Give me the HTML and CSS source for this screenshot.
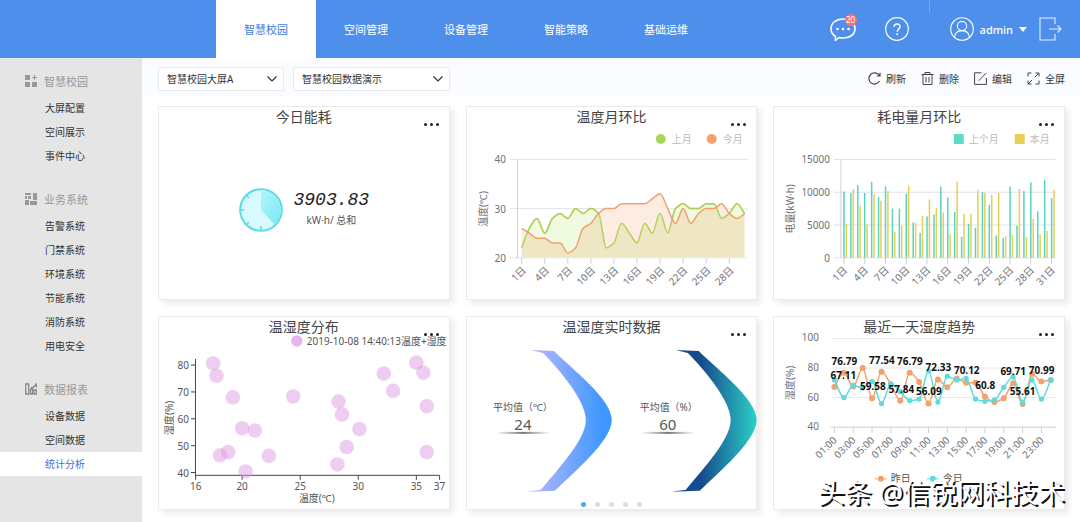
FILE: index.html
```html
<!DOCTYPE html>
<html lang="zh-CN">
<head>
    <meta charset="UTF-8">
    <meta name="viewport" content="width=device-width, initial-scale=1.0">
    <title>智慧校园</title>
    <link rel="stylesheet" href="styles.css">
</head>
<body>
    <header class="header">
        <nav class="main-nav">
            <a href="#" class="active">智慧校园</a>
            <a href="#">空间管理</a>
            <a href="#">设备管理</a>
            <a href="#">智能策略</a>
            <a href="#">基础运维</a>
        </nav>
        <div class="user-area">
            <button class="icon-btn chat" aria-label="消息">
                <svg width="26" height="26" viewBox="0 0 26 26" fill="none" stroke="#fff" stroke-width="1.6">
                    <path d="M5.5 20.5 C2.5 18.500 1 16 1 13 C1 7 6 3 13 3 C20 3 25 7 25 12.500 C25 18.500 20 22 13.500 22 C11.500 22 10 21.800 9 21.500 L5.300 24.500 Z" stroke-linejoin="round"/>
                    <g fill="#fff" stroke="none"><circle cx="7.500" cy="13" r="1.300"/><circle cx="13" cy="13" r="1.300"/><circle cx="18.500" cy="13" r="1.300"/></g>
                </svg>
                <span class="badge">20</span>
            </button>
            <button class="icon-btn help" aria-label="帮助">
                <svg width="24" height="24" viewBox="0 0 24 24" fill="none" stroke="#fff" stroke-width="1.200">
                    <circle cx="12" cy="12" r="11.300"/>
                    <path d="M9 9.800 C9 6 15 6 15 9.600 C15 12 12.200 12 12.200 14.800" stroke-width="1.500"/>
                    <circle cx="12.200" cy="17.300" r="1" fill="#fff" stroke="none"/>
                </svg>
            </button>
            <span class="divider"></span>
            <button class="user-btn">
                <svg width="24" height="24" viewBox="0 0 24 24" fill="none" stroke="#fff" stroke-width="1.100">
                    <circle cx="12" cy="12" r="11.300"/>
                    <circle cx="12" cy="9" r="4.600"/>
                    <path d="M4.500 20.500 C5 16 8 13.600 12 13.600 C16 13.600 19 16 19.500 20.500"/>
                </svg>
                admin
                <svg width="8" height="5" viewBox="0 0 8 5"><path d="M0 0 H8 L4 5 Z" fill="#fff"/></svg>
            </button>
            <button class="icon-btn logout" aria-label="退出">
                <svg width="23" height="24" viewBox="0 0 23 24" fill="none" stroke="#e6f0ff" stroke-width="1.100">
                    <path d="M16 7 V1 H1 V23 H16 V17 M10 12 H22 M18.500 8.500 L22 12 L18.500 15.500"/>
                </svg>
            </button>
        </div>
    </header>

    <div class="page">
        <aside class="sidebar">
            <section class="menu-group">
                <h2>
                    <svg width="12" height="12" viewBox="0 0 12 12" fill="#999"><path d="M0 0h5v5H0zM0 7h5v5H0zM7 7h5v5H7zM9 0h1v2h2v1h-2v2H9V3H7V2h2z"/></svg>
                    智慧校园
                </h2>
                <a href="#">大屏配置</a>
                <a href="#">空间展示</a>
                <a href="#">事件中心</a>
            </section>
            <section class="menu-group">
                <h2>
                    <svg width="12" height="12" viewBox="0 0 12 12" fill="#999"><path d="M0 0h6v2H0zM0 3h2v3H0zM3 3h3v3H3zM0 7h4v5H0zM8 0h4v7H8zM5 8h7v4H5z"/></svg>
                    业务系统
                </h2>
                <a href="#">告警系统</a>
                <a href="#">门禁系统</a>
                <a href="#">环境系统</a>
                <a href="#">节能系统</a>
                <a href="#">消防系统</a>
                <a href="#">用电安全</a>
            </section>
            <section class="menu-group">
                <h2>
                    <svg width="12" height="12" viewBox="0 0 12 12" fill="none" stroke="#888" stroke-width="1.300"><path d="M.7 1h3v10h-3zM5.500 11V6h2v5zM9 11V7h2.300v4zM6 4.500h2L11.300 1v3.500"/></svg>
                    数据报表
                </h2>
                <a href="#">设备数据</a>
                <a href="#">空间数据</a>
                <a href="#" class="active">统计分析</a>
            </section>
        </aside>

        <main class="content">
            <div class="toolbar">
                <label class="select-box screen-select">
                    <select aria-label="大屏"><option>智慧校园大屏A</option></select>
                    <svg width="10" height="6" viewBox="0 0 10 6" fill="none" stroke="#333" stroke-width="1.200"><path d="M.5.5 L5 5 L9.500.5"/></svg>
                </label>
                <label class="select-box data-select">
                    <select aria-label="数据"><option>智慧校园数据演示</option></select>
                    <svg width="10" height="6" viewBox="0 0 10 6" fill="none" stroke="#333" stroke-width="1.200"><path d="M.5.5 L5 5 L9.500.5"/></svg>
                </label>
                <div class="actions">
                    <button>
                        <svg width="13" height="13" viewBox="0 0 13 13" fill="none" stroke="#444" stroke-width="1.200"><path d="M11.500 9 A5.600 5.600 0 1 1 11.300 3.500 M12 .8 V4 H8.800"/></svg>
                        刷新
                    </button>
                    <button>
                        <svg width="13" height="13" viewBox="0 0 13 13" fill="none" stroke="#444"><path d="M.5 2.500 H12.500 M4 2.500 V.5 H9 V2.500 M2 2.500 V12.500 H11 V2.500 M5 5 V10.500 M8 5 V10.500"/></svg>
                        删除
                    </button>
                    <button>
                        <svg width="13" height="13" viewBox="0 0 13 13" fill="none" stroke="#444"><path d="M7.500 .8 H.6 V12.400 H12.400 V6 M4.500 8.800 L12.300 1"/></svg>
                        编辑
                    </button>
                    <button>
                        <svg width="13" height="13" viewBox="0 0 13 13" fill="none" stroke="#444"><path d="M1 4.500 V1 H4.500 M8.500 1 H12 V4.500 M12 8.500 V12 H8.500 M4.500 12 H1 V8.500 M12 1 L8 5 M1 12 L5 8"/></svg>
                        全屏
                    </button>
                </div>
            </div>

            <div class="grid">
                <section class="card">
                    <h3>今日能耗</h3>
                    <button class="more" aria-label="更多"><i></i><i></i><i></i></button>
                    <div class="energy">
                        <svg width="44" height="44" viewBox="0 0 44 44">
                            <defs>
                                <linearGradient id="clock-fill" x1="0" y1="0" x2="1" y2="1">
                                    <stop offset="0" stop-color="#b5f5fa"/><stop offset="1" stop-color="#79e9f1"/>
                                </linearGradient>
                            </defs>
                            <circle cx="22" cy="22" r="20.800" fill="#d6fafd" stroke="#5cdbe4" stroke-width="2"/>
                            <path d="M22 22 V2 A20 20 0 0 1 35.500 36.500 Z" fill="url(#clock-fill)"/>
                            <path d="M22 43 V38 M1 22 H5 M7 37 L10 34 M7 7 L10 10" stroke="#5cdbe4" stroke-width="1.500"/>
                        </svg>
                        <div class="energy-text">
                            <strong>3903.83</strong>
                            <span>kW·h/ 总和</span>
                        </div>
                    </div>
                </section>

                <section class="card">
                    <h3>温度月环比</h3>
                    <button class="more" aria-label="更多"><i></i><i></i><i></i></button>
                    <svg class="chart" id="temp-chart" viewBox="0 20 290 172"></svg>
                </section>

                <section class="card">
                    <h3>耗电量月环比</h3>
                    <button class="more" aria-label="更多"><i></i><i></i><i></i></button>
                    <svg class="chart" id="power-chart" viewBox="0 20 290 172"></svg>
                </section>

                <section class="card">
                    <h3>温湿度分布</h3>
                    <button class="more" aria-label="更多"><i></i><i></i><i></i></button>
                    <svg class="chart" id="scatter-chart" viewBox="0 20 290 172"></svg>
                </section>

                <section class="card">
                    <h3>温湿度实时数据</h3>
                    <button class="more" aria-label="更多"><i></i><i></i><i></i></button>
                    <svg class="chart" viewBox="0 20 290 162">
                        <defs>
                            <linearGradient id="arrow-blue"><stop offset="0.2" stop-color="#a3b2fc"/><stop offset="0.900" stop-color="#3d97ff"/></linearGradient>
                            <linearGradient id="arrow-teal"><stop offset="0.350" stop-color="#164c8e"/><stop offset="1" stop-color="#2cd0c8"/></linearGradient>
                            <linearGradient id="underline"><stop offset="0" stop-color="#777" stop-opacity="0"/><stop offset="0.500" stop-color="#777"/><stop offset="1" stop-color="#777" stop-opacity="0"/></linearGradient>
                            <path id="arrow" d="M64 33 L87 34 C106 53 145 82 145 103 C145 124 106 156 88 174 L60 175 L74 173 C93 150 119 122 119 103 C119 84 93 53 76 36 Z"/>
                        </defs>
                        <use href="#arrow" fill="url(#arrow-blue)"/>
                        <use href="#arrow" x="145" fill="url(#arrow-teal)"/>
                        <g text-anchor="middle">
                            <text x="56" y="94">平均值（℃）</text>
                            <text x="56" y="113" class="reading">24</text>
                            <text x="202" y="94">平均值（%）</text>
                            <text x="201" y="113" class="reading">60</text>
                        </g>
                        <rect x="29" y="115" width="54" height="2" fill="url(#underline)"/>
                        <rect x="174" y="115" width="54" height="2" fill="url(#underline)"/>
                    </svg>
                    <div class="pager">
                        <button class="active" aria-label="第1页"></button>
                        <button aria-label="第2页"></button>
                        <button aria-label="第3页"></button>
                        <button aria-label="第4页"></button>
                        <button aria-label="第5页"></button>
                    </div>
                </section>

                <section class="card">
                    <h3>最近一天湿度趋势</h3>
                    <button class="more" aria-label="更多"><i></i><i></i><i></i></button>
                    <svg class="chart" id="humidity-chart" viewBox="0 20 290 172"></svg>
                </section>
            </div>
        </main>
    </div>
    <div class="watermark">头条 @信锐网科技术</div>

    <script src="charts.js"></script>
</body>
</html>
```
FILE: styles.css
```css
* {
    box-sizing: border-box;
}

body {
    margin: 0;
    min-height: 100vh;
    display: flex;
    flex-direction: column;
    font-family: "Noto Sans", "Noto Sans CJK SC", sans-serif;
    font-size: 10px;
    color: #333;
    background: #fff;
}

a {
    color: inherit;
    text-decoration: none;
}

button {
    display: flex;
    align-items: center;
    border: none;
    padding: 0;
    background: none;
    font: inherit;
    color: inherit;
    cursor: pointer;
}

svg {
    flex-shrink: 0;
}

/* header */
.header {
    height: 58px;
    padding: 0 18px 0 216px;
    display: flex;
    justify-content: space-between;
    background: #4f8fec;
    color: #fff;
}

.main-nav {
    display: flex;
}

.main-nav a {
    width: 100px;
    display: flex;
    align-items: center;
    justify-content: center;
    font-size: 11px;
}

.main-nav .active {
    background: #fff;
    color: #3b7de0;
}

.user-area {
    display: flex;
    align-items: center;
}

.icon-btn {
    position: relative;
}

.badge {
    position: absolute;
    top: -2px;
    right: -1px;
    width: 12px;
    height: 12px;
    border-radius: 50%;
    background: #f8706c;
    font-size: 8px;
    line-height: 12px;
    text-align: center;
}

.help {
    margin-left: 29px;
}

.divider {
    align-self: flex-start;
    width: 1px;
    height: 12px;
    margin: 0 20px;
    background: #78a8f0;
}

.user-btn {
    gap: 6px;
    font-size: 11px;
    font-weight: 500;
}

.logout {
    margin-left: 12px;
}

/* layout */
.page {
    flex: 1;
    display: flex;
}

.sidebar {
    width: 142px;
    flex-shrink: 0;
    padding-top: 9px;
    background: #e5e5e5;
}

.menu-group {
    margin-bottom: 17px;
}

.menu-group h2 {
    height: 28px;
    margin: 0 0 1px;
    padding-left: 25px;
    display: flex;
    align-items: center;
    gap: 7px;
    font-size: 11px;
    font-weight: 400;
    color: #999;
}

.menu-group a {
    display: block;
    padding-left: 45px;
    line-height: 24px;
}

.menu-group .active {
    background: #fff;
    color: #3b6fe0;
}

.content {
    flex: 1;
    min-width: 0;
}

.toolbar {
    height: 39px;
    padding: 2px 15px 0 16px;
    display: flex;
    align-items: center;
    gap: 9px;
    background: #fafcff;
}

.select-box {
    position: relative;
}

.screen-select {
    width: 126px;
}

.data-select {
    width: 157px;
}

.select-box select {
    appearance: none;
    width: 100%;
    height: 24px;
    padding: 0 8px;
    border: 1px solid #e8ebf0;
    border-radius: 1px;
    background: #fff;
    font: inherit;
    color: inherit;
}

.select-box svg {
    position: absolute;
    right: 7px;
    top: 9px;
    pointer-events: none;
}

.actions {
    margin-left: auto;
    display: flex;
    gap: 15px;
}

.actions button {
    gap: 5px;
}

/* cards */
.grid {
    display: grid;
    grid-template-columns: repeat(3, 1fr);
    gap: 16px;
    padding: 9px 15px 12px 16px;
}

.card {
    position: relative;
    display: flex;
    flex-direction: column;
    border: 1px solid #ebebeb;
    background: #fff;
    box-shadow: 4px 4px 6px rgba(0, 0, 0, 0.08);
}

.card h3 {
    margin: 0;
    font-size: 14px;
    font-weight: 400;
    line-height: 20px;
    text-align: center;
    color: #444;
}

.more {
    position: absolute;
    top: 16px;
    right: 10px;
    gap: 3px;
}

.more i {
    width: 3px;
    height: 3px;
    border-radius: 50%;
    background: #222;
}

.energy {
    flex: 1;
    display: flex;
    align-items: center;
    justify-content: center;
    gap: 11px;
    padding-bottom: 6px;
}

.energy-text {
    display: flex;
    flex-direction: column;
    align-items: center;
    line-height: 20px;
    color: #555;
}

.energy-text strong {
    font-family: "Liberation Mono", monospace;
    font-size: 18px;
    font-style: italic;
    font-weight: 400;
    color: #222;
}

/* charts */
.chart {
    display: block;
    width: 100%;
    overflow: visible;
    font-size: 10px;
    fill: #555;
}

.chart .reading {
    font-size: 15px;
}

.chart .axis-text {
    fill: #6e7079;
}

.chart .legend {
    fill: #bbb;
}

.chart .value {
    fill: #111;
    font-weight: 700;
}

.pager {
    display: flex;
    justify-content: center;
    gap: 9px;
    padding-top: 3px;
}

.pager button {
    width: 5px;
    height: 5px;
    border-radius: 50%;
    background: #ddd;
}

.pager .active {
    background: #45aee0;
}

.watermark {
    position: absolute;
    right: 15px;
    bottom: 11px;
    font-size: 27px;
    line-height: 36px;
    color: #fff;
    text-shadow: 2px 2px 0 #111;
}
```
FILE: charts.js
```js
// small helpers that build svg markup
function line(x1, y1, x2, y2, color) {
    return `<line x1="${x1}" y1="${y1}" x2="${x2}" y2="${y2}" stroke="${color}"/>`;
}

function text(x, y, str, cls = 'axis-text', anchor = 'end') {
    return `<text x="${x}" y="${y}" class="${cls}" text-anchor="${anchor}">${str}</text>`;
}

function slanted(x, y, str) {
    return `<text transform="translate(${x} ${y}) rotate(-45)" class="axis-text" text-anchor="end">${str}</text>`;
}

function sideTitle(x, y, str, cls = 'axis-text') {
    return `<text transform="translate(${x} ${y}) rotate(-90)" class="${cls}" text-anchor="middle">${str}</text>`;
}

function dot(x, y, r, color) {
    return `<circle cx="${x}" cy="${y}" r="${r}" fill="${color}"/>`;
}

// monotone curve, flat at every local peak
function smooth(pts) {
    const slope = pts.map((p, i) => {
        if (i === 0 || i === pts.length - 1) return null;
        const a = (p[1] - pts[i - 1][1]) / (p[0] - pts[i - 1][0]);
        const b = (pts[i + 1][1] - p[1]) / (pts[i + 1][0] - p[0]);
        return a * b <= 0 ? 0 : 2 * a * b / (a + b);
    });
    const n = pts.length - 1;
    slope[0] = (pts[1][1] - pts[0][1]) / (pts[1][0] - pts[0][0]);
    slope[n] = (pts[n][1] - pts[n - 1][1]) / (pts[n][0] - pts[n - 1][0]);
    let d = `M${pts[0]}`;
    for (let i = 0; i < n; i++) {
        const [x0, y0] = pts[i], [x1, y1] = pts[i + 1];
        const h = (x1 - x0) / 3;
        d += ` C${x0 + h},${y0 + slope[i] * h} ${x1 - h},${y1 - slope[i + 1] * h} ${x1},${y1}`;
    }
    return d;
}

// 温度月环比
function drawTemp() {
    const last = [22, 26, 28, 25, 28, 29, 28, 30, 29, 30, 29, 22, 23, 27, 25, 23, 27, 25, 29, 25, 30, 31, 30, 30, 31, 31, 28, 29, 31, 29];
    const current = [26, 25, 24, 24, 23, 23, 21, 22, 26, 27, 29, 30, 30, 31, 31, 31, 31, 32, 33, 30, 27, 30, 27, 29, 30, 30, 31, 29, 28, 29];
    const px = i => 54.7 + i * 7.7;
    const py = v => 151 - (v - 20) * 4.93;
    let s = '';
    [40, 30, 20].forEach(v => {
        s += line(43, py(v), 281, py(v), '#e0e3ea') + text(39, py(v) + 4, v);
    });
    s += line(50.5, 52, 50.5, 151, '#c8d0e0');
    for (let i = 0; i < 30; i += 3) {
        s += line(px(i), 151, px(i), 157, '#c8d0e0') + slanted(px(i) + 5, 164, `${i + 1}日`);
    }
    const green = smooth(last.map((v, i) => [px(i), py(v)]));
    const orange = smooth(current.map((v, i) => [px(i), py(v)]));
    const base = `V151 H${px(0)} Z`;
    s += `<clipPath id="green-area"><path d="${green} ${base}"/></clipPath>`;
    s += `<path d="${green} ${base}" fill="#effae0"/>`;
    s += `<path d="${orange} ${base}" fill="#fdece2"/>`;
    s += `<path d="${green}" fill="none" stroke="#a8d858" stroke-width="1.5"/>`;
    // where both areas overlap
    s += `<path d="${orange} ${base}" fill="#efe6c4" clip-path="url(#green-area)"/>`;
    s += `<path d="${green}" fill="none" stroke="#b4cc50" stroke-opacity="0.7" stroke-width="1.5"/>`;
    s += `<path d="${orange}" fill="none" stroke="#f0a070" stroke-width="1.5"/>`;
    s += sideTitle(20, 102, '温度(℃)');
    s += dot(194, 32, 5, '#a8d858') + text(205, 36, '上月', 'legend', 'start');
    s += dot(245, 32, 5, '#f2a26c') + text(256, 36, '今月', 'legend', 'start');
    document.getElementById('temp-chart').innerHTML = s;
}

// 耗电量月环比
function drawPower() {
    const last = [10100, 9900, 11100, 9900, 11600, 9300, 10900, 7500, 7500, 9800, 5400, 3800, 6300, 6600, 10900, 9200, 7000, 3200, 5200, 4600, 10000, 8100, 3400, 3000, 10900, 4900, 10200, 11500, 7100, 11900, 9100];
    const current = [5200, 10500, 8000, 5100, 9700, 8700, 10200, 4000, 4900, 11000, 5300, 6400, 8900, 7600, 6900, 3600, 11600, 6700, 6700, 10400, 9900, 9600, 9900, 3300, 3500, 10500, 3200, 5900, 3600, 4100, 10400];
    const px = i => 70 + i * 6.93;
    const h = v => v * 98.5 / 15000;
    let s = '';
    [15000, 10000, 5000, 0].forEach(v => {
        const y = 151 - h(v);
        s += line(60, y, 282, y, '#e0e3ea') + text(56, y + 4, v);
    });
    s += line(67, 52, 67, 151, '#c8d0e0');
    last.forEach((v, i) => {
        s += `<rect x="${px(i) - 0.7}" y="${151 - h(v)}" width="1.5" height="${h(v)}" fill="#58d4c0"/>`;
        s += `<rect x="${px(i) + 1.7}" y="${151 - h(current[i])}" width="1.5" height="${h(current[i])}" fill="#e6cf55"/>`;
        if (i % 3 === 0) {
            s += line(px(i), 151, px(i), 157, '#c8d0e0') + slanted(px(i) + 4, 164, `${i + 1}日`);
        }
    });
    s += sideTitle(20, 102, '电量(kW·h)');
    s += '<rect x="180" y="27" width="10" height="10" fill="#5cdcc8"/>' + text(195, 36, '上个月', 'legend', 'start');
    s += '<rect x="241" y="27" width="10" height="10" fill="#e8d050"/>' + text(256, 36, '本月', 'legend', 'start');
    document.getElementById('power-chart').innerHTML = s;
}

// 温湿度分布
function drawScatter() {
    const points = [[17.5, 80.6], [17.8, 76], [19.2, 68], [20, 56.5], [21.1, 55.6], [18.8, 47.6], [18.1, 46.4], [22.3, 46.2], [20.3, 40.4], [24.4, 68.3], [28.3, 66.4], [28.6, 61.6], [30.1, 56.2], [29, 49.5], [28.2, 43], [32.2, 76.8], [33, 70.4], [35, 80.9], [35.6, 77.2], [35.9, 64.7], [35.9, 47.6]];
    const px = t => 36.7 + (t - 16) * 11.63;
    const py = h => 155.7 - (h - 40) * 2.69;
    let s = line(36.5, 42, 36.5, 158.5, '#444') + line(36.5, 158.5, 281, 158.5, '#444');
    [80, 70, 60, 50, 40].forEach(v => {
        s += line(32, py(v), 36.5, py(v), '#444') + text(30, py(v) + 4, v, '');
    });
    [16, 20, 25, 30, 35, 37].forEach(v => {
        s += line(px(v), 158.5, px(v), 163, '#444') + text(px(v), 173, v, '', 'middle');
    });
    points.forEach(([t, h]) => {
        s += `<circle cx="${px(t)}" cy="${py(h)}" r="7.3" fill="#dd9be4" fill-opacity="0.5"/>`;
    });
    s += text(158, 185, '温度(℃)', '', 'middle') + sideTitle(14, 101, '湿度(%)', '');
    s += dot(138, 24, 5.7, '#e8b4ee') + text(148, 28, '2019-10-08 14:40:13温度+湿度', '', 'start');
    document.getElementById('scatter-chart').innerHTML = s;
}

// 最近一天湿度趋势
function drawHumidity() {
    const yesterday = [67.11, 76.79, 67.5, 80, 59.58, 77.54, 69, 57.84, 76.79, 70.5, 56.09, 72.33, 67, 73, 70.12, 70, 60.8, 57, 59.6, 69.71, 55.61, 76, 70.99, 72];
    const today = [72, 60, 68.5, 66.5, 71, 56, 69, 64, 58, 59, 78, 57, 74.5, 72, 73, 59, 57.5, 58.5, 67, 74, 57, 72, 59, 72];
    const labels = [[70.5, 45, '76.79'], [69.5, 59, '67.11'], [108, 44, '77.54'], [99, 70, '59.58'], [136, 45, '76.79'], [127.5, 73, '57.84'], [155, 75, '56.09'], [164.5, 51, '72.33'], [193, 54, '70.12'], [211.5, 69, '60.8'], [239.5, 55, '69.71'], [249, 75, '55.61'], [268, 54, '70.99']];
    const px = i => 60.5 + i * 9.42;
    const py = v => 110.3 - (v - 40) * 1.48;
    let s = '';
    [100, 80, 60, 40].forEach(v => {
        s += line(57, py(v), 282, py(v), v === 40 ? '#c8ccd8' : '#e8e8ec') + text(45, py(v) + 3, v);
    });
    for (let i = 0; i < 24; i += 2) {
        s += line(px(i), 110, px(i), 116, '#c8d0e0') + slanted(px(i) + 3, 124, `${String(i + 1).padStart(2, '0')}:00`);
    }
    [[yesterday, '#f2a26c', 3], [today, '#5cdce0', 2.6]].forEach(([data, color, r]) => {
        const pts = data.map((v, i) => [px(i), py(v)]);
        s += `<path d="${smooth(pts)}" fill="none" stroke="${color}" stroke-width="1.5"/>`;
        pts.forEach(p => s += dot(p[0], p[1], r, color));
    });
    labels.forEach(([x, y, str]) => s += text(x, y + 3, str, 'value', 'middle'));
    s += sideTitle(20, 66, '湿度(%)');
    s += line(101, 162, 113, 162, '#f2a26c') + dot(107, 162, 3, '#f2a26c') + text(117, 165, '昨日', '', 'start');
    s += line(153, 162, 165, 162, '#5cdce0') + dot(159, 162, 3, '#5cdce0') + text(169, 165, '今日', '', 'start');
    document.getElementById('humidity-chart').innerHTML = s;
}

drawTemp();
drawPower();
drawScatter();
drawHumidity();
```
